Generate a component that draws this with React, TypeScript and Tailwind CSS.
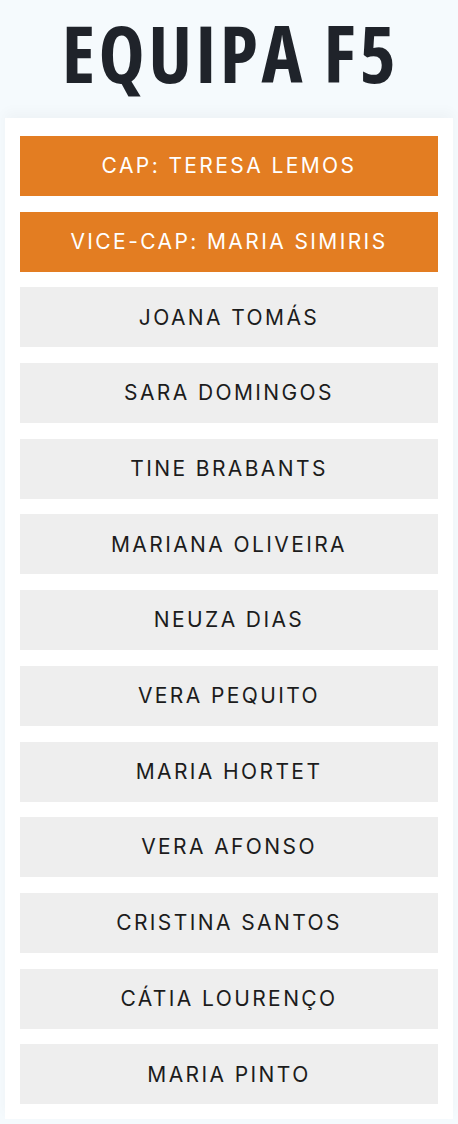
import React from "react";

const players = [
  "JOANA TOMÁS",
  "SARA DOMINGOS",
  "TINE BRABANTS",
  "MARIANA OLIVEIRA",
  "NEUZA DIAS",
  "VERA PEQUITO",
  "MARIA HORTET",
  "VERA AFONSO",
  "CRISTINA SANTOS",
  "CÁTIA LOURENÇO",
  "MARIA PINTO",
];

const Row = ({ label, captain }: { label: string; captain?: boolean }) => (
  <div
    className={
      captain
        ? "h-[60px] flex items-center justify-center bg-[#e37d22] text-white text-[21px] tracking-[2.4px]"
        : "h-[60px] flex items-center justify-center bg-[#eeeeee] text-[#1c1c1c] text-[21px] tracking-[2.4px]"
    }
  >
    {label}
  </div>
);

export default function App() {
  return (
    <div className="min-h-[1124px] bg-[#f5fafd] px-[5px] pb-[6px] font-['Inter',sans-serif]">
      <div className="h-[118px] flex items-start justify-center">
        <h1 className="-mt-[5px] pl-[3px] font-['Open_Sans',sans-serif] font-bold font-stretch-[85%] text-[78px] leading-normal tracking-[3.5px] text-[#1f232a] whitespace-nowrap">
          EQUIPA F5
        </h1>
      </div>
      <div className="bg-white px-[15px] pt-[18px] pb-[15px] flex flex-col gap-[15.7px] shadow-[0_-6px_12px_rgba(0,0,0,0.03)]">
        <Row label="CAP: TERESA LEMOS" captain />
        <Row label="VICE-CAP: MARIA SIMIRIS" captain />
        {players.map((p) => (
          <Row key={p} label={p} />
        ))}
      </div>
    </div>
  );
}
